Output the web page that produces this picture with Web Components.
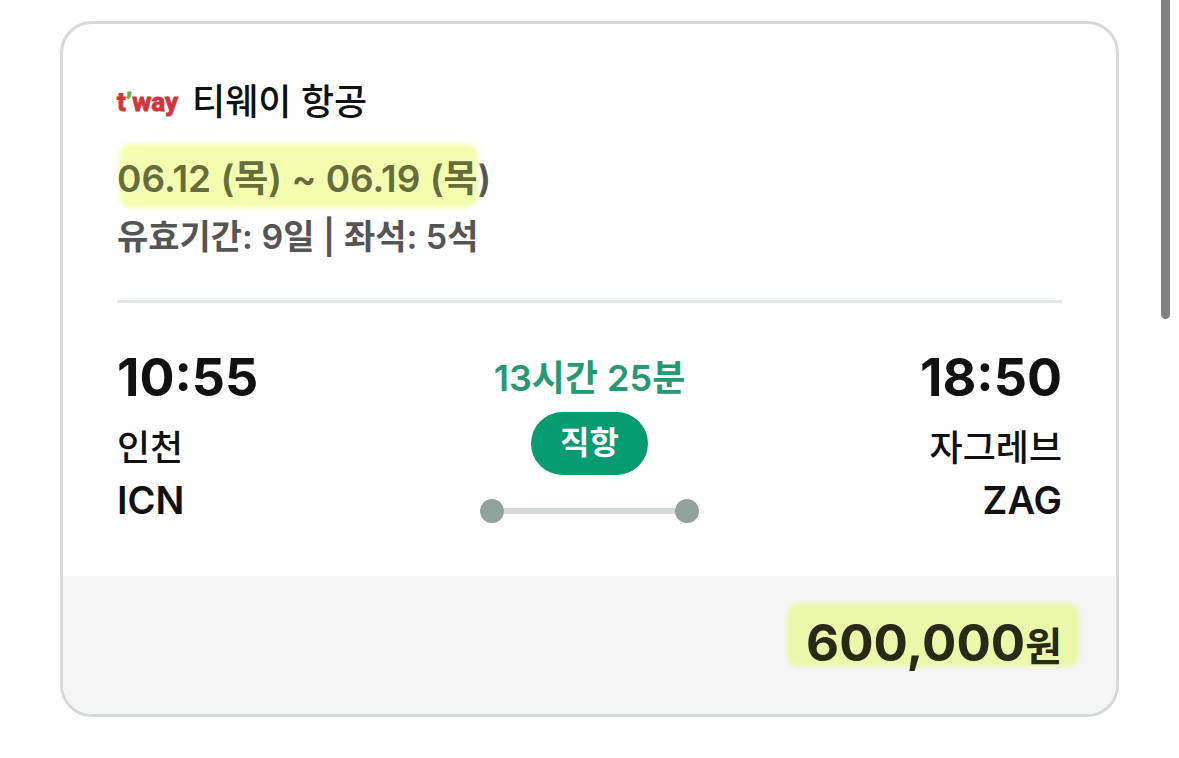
<!DOCTYPE html>
<html lang="ko">
<head>
<meta charset="utf-8">
<meta name="viewport" content="width=device-width, initial-scale=1">
<title>항공권</title>
<style>
  body {
    margin: 0;
    background: #fefefe;
    color: #111;
    font-family: Inter, "Noto Sans CJK KR", sans-serif;
  }
  main { padding: 21px 60px 41px; }
</style>
</head>
<body>
<main>
  <fare-card>
    <airline-name slot="airline">티웨이 항공</airline-name>
    <div slot="dates"><marker-text style="--ink:#676c3c">06.12 (목) ~ 06.19 (목</marker-text>)</div>
    <div slot="terms">유효기간: 9일 | 좌석: 5석</div>
    <flight-stop slot="from" time="10:55" code="ICN">인천</flight-stop>
    <flight-leg slot="leg" duration="13시간 25분">직항</flight-leg>
    <flight-stop slot="to" time="18:50" code="ZAG" class="end">자그레브</flight-stop>
    <fare-price slot="price" amount="600,000">원</fare-price>
  </fare-card>
</main>
<scroll-thumb></scroll-thumb>

<script>
  function define(name, render) {
    customElements.define(name, class extends HTMLElement {
      connectedCallback() {
        if (!this.shadowRoot) this.attachShadow({ mode: "open" }).innerHTML = render(this);
      }
    });
  }

  define("fare-card", () => `
    <style>
      :host { display: block; }
      article { border: 3px solid #d5dad9; border-radius: 32px; overflow: hidden; background: #fff; }
      .body { padding: 50px 54px; }
      .period { margin-top: 21px; padding-bottom: 35px; border-bottom: 3px solid #e5e8e8;
        color: #555; font-size: 37px; line-height: 56px; font-weight: 600; }
      .terms { margin-top: 2px; font-size: 34px; }
      .route { display: grid; grid-template-columns: 1fr auto 1fr; margin-top: 45px; }
      footer { background: #f5f5f5; padding: 37px 54px 41px; text-align: right; }
    </style>
    <article>
      <div class="body">
        <slot name="airline"></slot>
        <div class="period">
          <slot name="dates"></slot>
          <div class="terms"><slot name="terms"></slot></div>
        </div>
        <div class="route">
          <slot name="from"></slot><slot name="leg"></slot><slot name="to"></slot>
        </div>
      </div>
      <footer><slot name="price"></slot></footer>
    </article>`);

  define("airline-name", () => `
    <style>
      :host { display: flex; align-items: center; gap: 14px; font-size: 36px; line-height: 56px; font-weight: 500; }
      .logo { color: #d3353b; font: 700 26px/56px Roboto, sans-serif;
        -webkit-text-stroke: 1px currentColor; }
      .logo i { color: #6fae45; font-style: normal; }
      h2 { margin: 0; font: inherit; }
    </style>
    <span class="logo">t<i>’</i>way</span>
    <h2><slot></slot></h2>`);

  define("marker-text", () => `
    <style>
      :host { display: inline-block; position: relative; isolation: isolate; color: var(--ink); }
      :host::before { content: ""; position: absolute; z-index: -1;
        inset: var(--reach, -7px 0 -1px 2px); background: var(--marker, #f3ffae);
        border-radius: 12px; filter: blur(2px); }
    </style>
    <slot></slot>`);

  define("flight-stop", el => `
    <style>
      :host { display: block; line-height: 52px; }
      :host(.end) { text-align: right; }
      time { display: block; margin-bottom: 14px; font-size: 52px; line-height: 60px; font-weight: 700; }
      .city { font-size: 36px; font-weight: 500; }
      .code { font-size: 38px; font-weight: 600; }
    </style>
    <time>${el.getAttribute("time")}</time>
    <div class="city"><slot></slot></div>
    <div class="code">${el.getAttribute("code")}</div>`);

  define("flight-leg", el => `
    <style>
      :host { display: flex; flex-direction: column; align-items: center; width: 219px; }
      .duration { font-size: 36px; line-height: 60px; font-weight: 600; color: #269970; white-space: nowrap; }
      .badge { margin: 4px 0 24px; padding: 0 29px 2px; border-radius: 32px; background: #069b70;
        color: #fff; font-size: 32px; line-height: 61px; font-weight: 600; }
      svg { display: block; width: 100%; height: 24px; }
    </style>
    <div class="duration">${el.getAttribute("duration")}</div>
    <div class="badge"><slot></slot></div>
    <svg viewBox="0 0 219 24" aria-hidden="true">
      <path d="M12 12H207" stroke="#d5dad9" stroke-width="6"/>
      <circle cx="12" cy="12" r="12" fill="#8fa29b"/><circle cx="207" cy="12" r="12" fill="#8fa29b"/>
    </svg>`);

  define("fare-price", el => `
    <style>
      :host { display: block; font-size: 51px; line-height: 60px; font-weight: 700; }
      marker-text { --ink: #282a17; --marker: #ebf8aa; --reach: -10px -17px 6px -19px; }
      .unit { font-size: 40px; line-height: 40px; }
    </style>
    <marker-text>${el.getAttribute("amount")}<span class="unit"><slot></slot></span></marker-text>`);

  define("scroll-thumb", () => `
    <style>
      :host { position: fixed; top: 0; right: 9px; width: 9px; height: 319px;
        background: #808080; border-radius: 0 0 5px 5px; }
    </style>`);
</script>
</body>
</html>
